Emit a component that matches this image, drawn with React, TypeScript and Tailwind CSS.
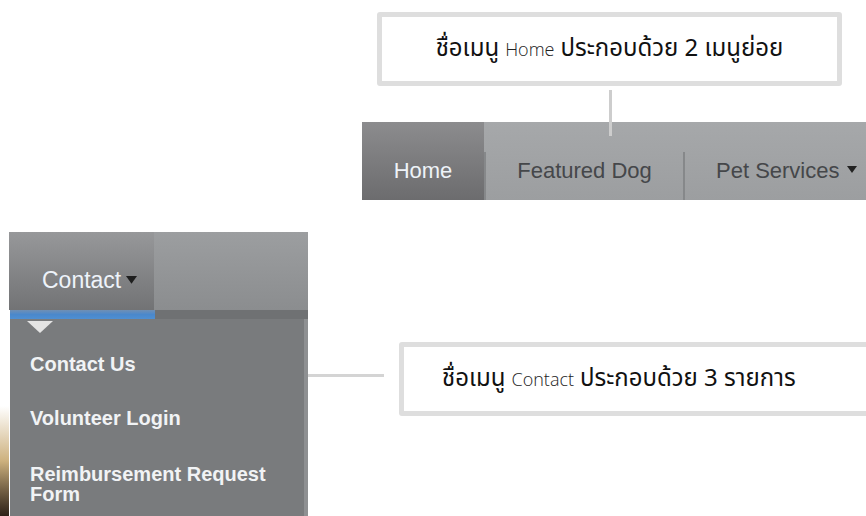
import React from "react";

const thai = { fontFamily: '"Noto Sans Thai", "Noto Sans", "DejaVu Sans", sans-serif' };
const arial = { fontFamily: '"Liberation Sans", Arial, sans-serif' };

const Caret: React.FC<{ className?: string }> = ({ className }) => (
  <svg viewBox="0 0 10 8" className={className}>
    <path d="M0 0 L10 0 L5 7 Z" fill="currentColor" />
  </svg>
);

const Callout: React.FC<{ word: string; before: string; after: string; className?: string }> = ({
  word,
  before,
  after,
  className,
}) => (
  <div
    className={`h-[74px] border-[5px] border-[#dedede] rounded-[3px] bg-white flex items-center text-[#111] text-[24px] ${className}`}
    style={thai}
  >
    <span>{before}</span>
    <span className="mx-[6px] text-[18px] font-light text-[#222]" style={{ fontFamily: '"Open Sans", sans-serif' }}>
      {word}
    </span>
    <span>{after}</span>
  </div>
);

export default function App() {
  return (
    <div className="w-[866px] h-[516px] overflow-hidden bg-white flex flex-col" style={arial}>
      {/* top: Home menu */}
      <div className="flex flex-col h-[232px] shrink-0">
        <Callout
          className="ml-[377px] mt-[12px] w-[465px] justify-center"
          before="ชื่อเมนู"
          word="Home"
          after="ประกอบด้วย 2 เมนูย่อย"
        />
        <div className="relative ml-[362px] mt-[36px] h-[78px] flex bg-gradient-to-b from-[#a6a8aa] to-[#9c9ea0]">
          <div className="absolute left-[247px] -top-[32px] w-[3px] h-[46px] bg-[#cdcdcd]" />
          <div className="w-[122px] shrink-0 flex items-center justify-center pt-[18px] text-[22px] text-[#eef3f8] bg-gradient-to-b from-[#8c8c8e] to-[#6c6c6e]">
            Home
          </div>
          <div className="self-end shrink-0 w-[2px] h-[48px] bg-[#86888a]" />
          <div className="w-[197px] shrink-0 flex items-center justify-center pt-[18px] text-[22px] text-[#45474a]">
            Featured Dog
          </div>
          <div className="self-end shrink-0 w-[2px] h-[48px] bg-[#86888a]" />
          <div className="flex items-center pl-[31px] pt-[18px] text-[22px] text-[#45474a]">
            Pet Services
            <Caret className="w-[10px] h-[8px] ml-[7px] text-[#222]" />
          </div>
        </div>
      </div>

      {/* bottom: Contact menu */}
      <div className="flex items-start flex-1">
        <div className="w-[9px] shrink-0 h-full flex flex-col justify-end">
          <div className="h-[110px] bg-gradient-to-b from-[#ffffff] via-[#cdb17e] to-[#2e2218]" />
        </div>
        <div className="w-[299px] shrink-0 h-full flex flex-col">
          <div className="h-[78px] flex bg-gradient-to-b from-[#9c9ea0] to-[#8b8d8f]">
            <div className="w-[145px] flex items-center pl-[33px] pt-[18px] text-[23px] text-[#eef3fa] bg-gradient-to-b from-[#97989a] to-[#727375]">
              Contact
              <Caret className="w-[11px] h-[9px] ml-[5px] text-[#1e1e1e]" />
            </div>
          </div>
          <div className="h-[9px] flex">
            <div className="w-[145px] ml-[1px] bg-gradient-to-b from-[#6f8fb4] via-[#4a88cc] to-[#4f8fd2]" />
            <div className="flex-1 bg-[#6f7173]" />
          </div>
          <div className="flex-1 ml-[1px] w-[298px] bg-[#797b7d] border-r-[4px] border-[#8e9092] flex flex-col pl-[20px] text-[20px] leading-[20px] font-bold text-[#f1f3f5]">
            <svg viewBox="0 0 26 12" className="w-[26px] h-[12px] mt-[2px] -ml-[3px]">
              <path d="M0 0 L26 0 L13 12 Z" fill="#e4e4e4" />
            </svg>
            <div className="mt-[21px]">Contact Us</div>
            <div className="mt-[34px]">Volunteer Login</div>
            <div className="mt-[36px]">Reimbursement Request Form</div>
          </div>
        </div>
        <div className="w-[76px] shrink-0 h-[3px] mt-[142px] bg-[#d4d4d4]" />
        <Callout
          className="ml-[15px] mt-[110px] w-[500px] shrink-0 pl-[38px]"
          before="ชื่อเมนู"
          word="Contact"
          after="ประกอบด้วย 3 รายการ"
        />
      </div>
    </div>
  );
}
